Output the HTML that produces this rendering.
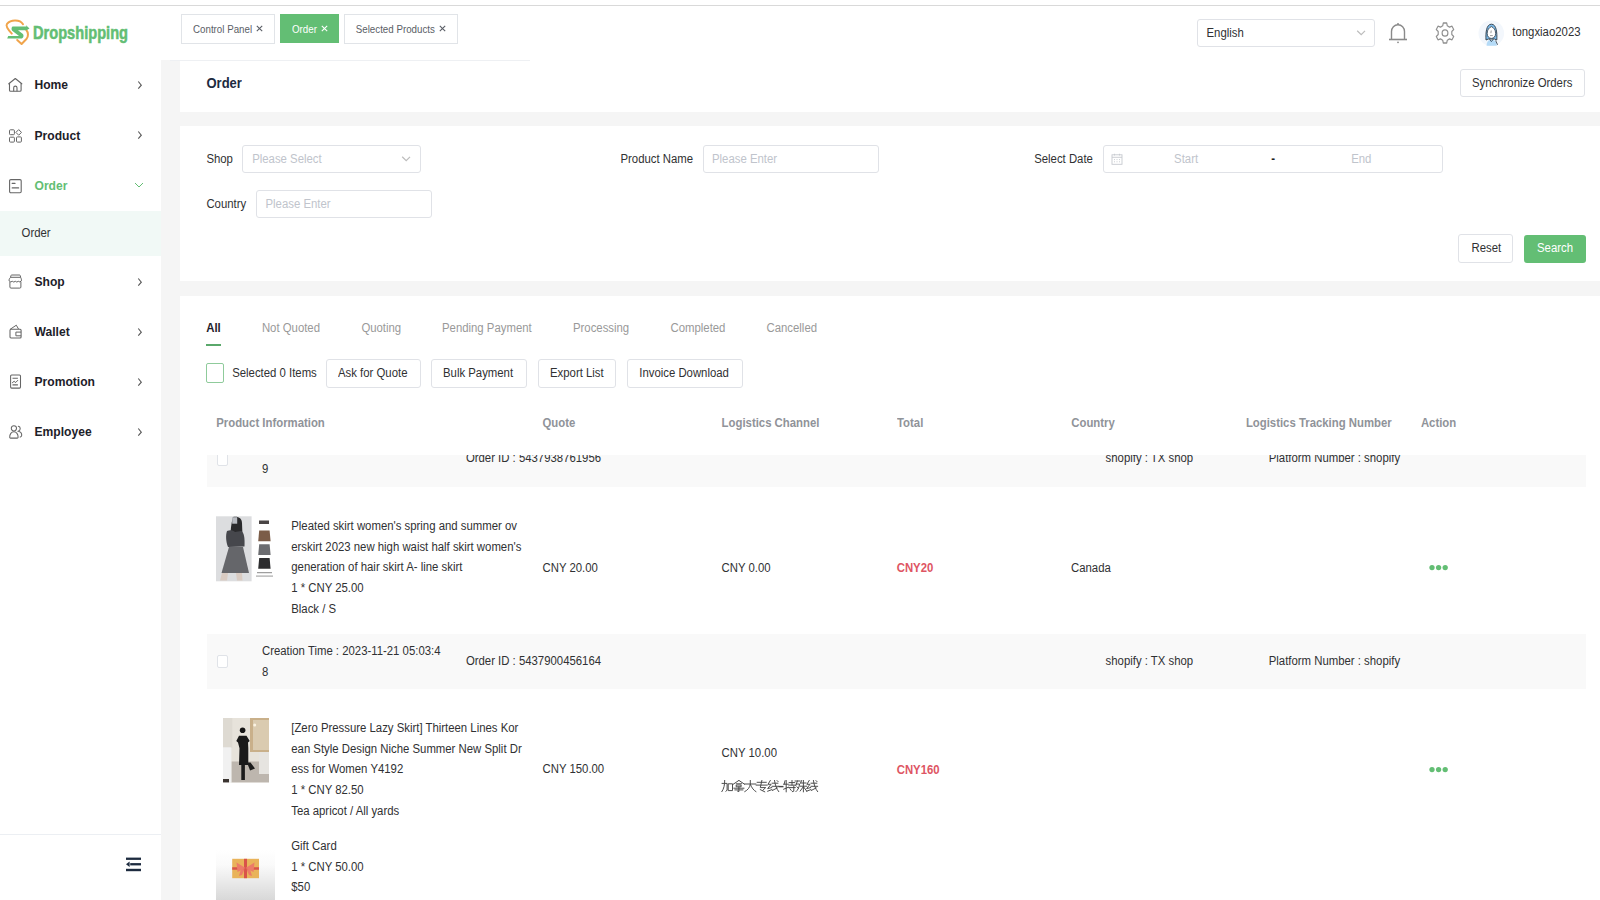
<!DOCTYPE html>
<html><head><meta charset="utf-8">
<style>
*{box-sizing:border-box;margin:0;padding:0}
html,body{width:1600px;height:900px;overflow:hidden;background:#fff;font-family:"Liberation Sans",sans-serif;color:#303133;position:relative}
.r{position:absolute}
.t{position:absolute;white-space:nowrap;line-height:1;transform:scaleY(1.13)}
</style></head><body>
<div class="r" style="left:0.00px;top:5.00px;width:1600.00px;height:1.00px;background:#d9d9d9"></div>
<div class="r" style="left:161.00px;top:60.00px;width:1439.00px;height:840.00px;background:#f5f5f5"></div>
<div class="r" style="left:180.00px;top:60.00px;width:1420.00px;height:52.00px;background:#fff"></div>
<div class="r" style="left:180.00px;top:126.40px;width:1420.00px;height:154.60px;background:#fff"></div>
<div class="r" style="left:180.00px;top:295.60px;width:1420.00px;height:604.40px;background:#fff"></div>
<div class="r" style="left:170.00px;top:60.00px;width:360.00px;height:1.00px;background:#eef0f3"></div>
<svg class="r" style="left:0px;top:10px" width="32" height="40" viewBox="0 0 32 40">
<path d="M23 14.2 C 20 9.5, 11 9.2, 7 13.8 C 5.6 15.6, 6.6 18, 11.8 23.6" fill="none" stroke="#f0a44b" stroke-width="2" stroke-linecap="round"/>
<path d="M26.3 20 C 28.4 22.5, 28.6 26.5, 26.4 29 L 21.6 34 L 17.2 30" fill="none" stroke="#f0a44b" stroke-width="2" stroke-linecap="round" stroke-linejoin="round"/>
<path d="M12.5 16.6 L 26.5 16.6 L 25.8 15 L 29.5 18.4 L 26.5 20.2 L 18 20.2 L 22.6 23.8 C 24.2 25.3, 23.6 28.3, 21.6 28.5 L 7.2 28.6 L 8.2 26 L 19 26 L 12.2 20.8 C 11.2 19.8, 11.4 17.3, 12.5 16.6 Z" fill="#63be74"/>
</svg>
<svg class="r" style="left:32px;top:20px" width="100" height="26"><text x="1" y="19" font-family="Liberation Sans" font-weight="700" font-size="18" fill="#63be74" stroke="#63be74" stroke-width="0.55" textLength="95" lengthAdjust="spacingAndGlyphs">Dropshipping</text></svg>
<div class="r" style="left:181.00px;top:13.50px;width:93.50px;height:30.00px;background:#fff;border:1px solid #e1e4e8"></div>
<div class="t" style="left:193.00px;top:24.55px;font-size:9.75px;font-weight:400;color:#5a5e66;transform-origin:0 8.25px;">Control Panel</div>
<svg class="r" style="left:256.00px;top:25px" width="7" height="7"><path d="M0.8 0.8 L6.2 6.2 M6.2 0.8 L0.8 6.2" stroke="#5a5e66" stroke-width="1.1"/></svg>
<div class="r" style="left:280.00px;top:14.00px;width:59.00px;height:29.00px;background:#63be74"></div>
<div class="t" style="left:292.00px;top:24.55px;font-size:9.75px;font-weight:400;color:#fff;transform-origin:0 8.25px;">Order</div>
<svg class="r" style="left:320.50px;top:25px" width="7" height="7"><path d="M0.8 0.8 L6.2 6.2 M6.2 0.8 L0.8 6.2" stroke="#fff" stroke-width="1.1"/></svg>
<div class="r" style="left:343.75px;top:13.50px;width:114.00px;height:30.00px;background:#fff;border:1px solid #e1e4e8"></div>
<div class="t" style="left:355.75px;top:24.55px;font-size:9.75px;font-weight:400;color:#5a5e66;transform-origin:0 8.25px;">Selected Products</div>
<svg class="r" style="left:439.25px;top:25px" width="7" height="7"><path d="M0.8 0.8 L6.2 6.2 M6.2 0.8 L0.8 6.2" stroke="#5a5e66" stroke-width="1.1"/></svg>
<div class="r" style="left:1197.00px;top:19.00px;width:178.00px;height:28.00px;background:#fff;border:1px solid #e0e2e7;border-radius:3px"></div>
<div class="t" style="left:1206.50px;top:27.67px;font-size:11.375px;font-weight:400;color:#303133;transform-origin:0 9.63px;">English</div>
<svg class="r" style="left:1355px;top:29px" width="12" height="8"><path d="M2.2 1.8 L6.2 5.7 L10 1.9" fill="none" stroke="#bdbdbd" stroke-width="1.25"/></svg>
<svg class="r" style="left:1388px;top:22px" width="20" height="22" viewBox="0 0 20 22">
<path d="M3.5 17 L3.5 9.5 C3.5 5.5 6.3 2.8 10 2.8 C13.7 2.8 16.5 5.5 16.5 9.5 L16.5 17" fill="none" stroke="#8a8a8a" stroke-width="1.4"/>
<path d="M1 17.5 L19 17.5" stroke="#8a8a8a" stroke-width="1.6"/>
<circle cx="10" cy="2" r="1" fill="#8a8a8a"/><circle cx="10" cy="20.3" r="0.9" fill="#8a8a8a"/>
</svg>
<svg class="r" style="left:1434.5px;top:22px" width="20" height="22" viewBox="0 1.6 20 19.8" preserveAspectRatio="none">
<path d="M8.3 2.5 L11.7 2.5 L12.3 5 L14.5 6.2 L17 5.4 L18.7 8.4 L16.8 10.2 L16.8 12.8 L18.7 14.6 L17 17.6 L14.5 16.8 L12.3 18 L11.7 20.5 L8.3 20.5 L7.7 18 L5.5 16.8 L3 17.6 L1.3 14.6 L3.2 12.8 L3.2 10.2 L1.3 8.4 L3 5.4 L5.5 6.2 L7.7 5 Z" fill="none" stroke="#8f8f8f" stroke-width="1.15" stroke-linejoin="round"/>
<circle cx="10" cy="11.5" r="2.9" fill="none" stroke="#8f8f8f" stroke-width="1.15"/>
</svg>
<svg class="r" style="left:1478px;top:19px" width="27" height="28" viewBox="0 0 27 28">
<circle cx="13.3" cy="14.3" r="12.8" fill="#f3f7fc"/>
<path d="M8.6 26.8 C8.6 22.5, 10.5 20.8, 13.4 20.8 C16.3 20.8, 18.8 22.5, 18.8 26.8 Z" fill="#b5dbf7"/>
<path d="M8 21 C7.6 14, 8.2 5.2, 13.4 5.2 C18.6 5.2, 19.2 14, 18.8 21 L16.5 20 L10.3 20 Z" fill="#7cbbea" stroke="#2d3a46" stroke-width="0.9"/>
<path d="M9.2 14.5 C9.2 10.5, 11 8.8, 13.4 7.6 C15.8 8.8, 17.6 10.5, 17.6 14.5 C17.6 17.5, 15.8 19.4, 13.4 19.4 C11 19.4, 9.2 17.5, 9.2 14.5 Z" fill="#fff" stroke="#2d3a46" stroke-width="0.8"/>
<path d="M12 16.6 L14.8 16.6 M13.2 11.5 L12.9 14.2" stroke="#555" stroke-width="0.6" fill="none"/>
<path d="M11.5 20.2 L13.4 22.6 L15.3 20.2" fill="none" stroke="#2d3a46" stroke-width="0.8"/>
<path d="M17.6 21.5 L19.6 25.8" stroke="#2d3a46" stroke-width="0.8"/>
</svg>
<div class="t" style="left:1512.30px;top:27.07px;font-size:11.375px;font-weight:400;color:#303133;transform-origin:0 9.63px;">tongxiao2023</div>
<svg class="r" style="left:8px;top:78.1px;overflow:visible" width="14" height="14" viewBox="0 0 14 14"><path d="M0.8 5.8 L7.3 0.5 L13.8 5.8" fill="none" stroke="#666" stroke-width="1.1" stroke-linejoin="round" stroke-linecap="round"/><path d="M1.5 5.3 V12.3 Q1.5 13.3 2.6 13.3 H12 Q13.1 13.3 13.1 12.3 V5.3" fill="none" stroke="#666" stroke-width="1.1"/><path d="M5.7 13.3 V9.8 A1.65 1.65 0 0 1 9.0 9.8 V13.3" fill="none" stroke="#666" stroke-width="1.1"/></svg>
<div class="t" style="left:34.50px;top:79.26px;font-size:12.1px;font-weight:700;color:#1d2129;transform-origin:0 10.24px;">Home</div>
<svg class="r" style="left:136px;top:80.1px" width="8" height="10"><path d="M2.3 1.5 L5.3 5.2 L2.3 8.6" fill="none" stroke="#555" stroke-width="1.1"/></svg>
<svg class="r" style="left:8px;top:128.4px;overflow:visible" width="14" height="14" viewBox="0 0 14 14"><rect x="1.5" y="1.8" width="4.9" height="4.9" rx="0.9" fill="none" stroke="#666" stroke-width="1"/><path d="M10.7 1.6 L13.5 4.4 L10.7 7.2 L7.9 4.4 Z" fill="none" stroke="#666" stroke-width="1" stroke-linejoin="round"/><rect x="1.5" y="9.2" width="4.9" height="4.9" rx="0.9" fill="none" stroke="#666" stroke-width="1"/><rect x="8.5" y="8.9" width="4.9" height="5.2" rx="0.9" fill="none" stroke="#666" stroke-width="1"/></svg>
<div class="t" style="left:34.50px;top:129.56px;font-size:12.1px;font-weight:700;color:#1d2129;transform-origin:0 10.24px;">Product</div>
<svg class="r" style="left:136px;top:130.4px" width="8" height="10"><path d="M2.3 1.5 L5.3 5.2 L2.3 8.6" fill="none" stroke="#555" stroke-width="1.1"/></svg>
<svg class="r" style="left:8px;top:179.0px;overflow:visible" width="14" height="14" viewBox="0 0 14 14"><rect x="1.6" y="0.6" width="11.6" height="13.2" rx="1.2" fill="none" stroke="#666" stroke-width="1.1"/><path d="M4.2 4.4 L7 4.4 M4.2 8.9 L10.6 8.9" stroke="#666" stroke-width="1.2" stroke-linecap="round"/></svg>
<div class="t" style="left:34.50px;top:180.16px;font-size:12.1px;font-weight:700;color:#63be74;transform-origin:0 10.24px;">Order</div>
<svg class="r" style="left:134px;top:181.0px" width="10" height="8"><path d="M1 2 L5 6 L9 2" fill="none" stroke="#63be74" stroke-width="1"/></svg>
<svg class="r" style="left:8px;top:274.5px;overflow:visible" width="14" height="14" viewBox="0 0 14 14"><path d="M2.6 2.3 L2.9 0.7 Q3.05 0 3.7 0 H11.5 Q12.15 0 12.3 0.7 L12.6 2.3 Z" fill="none" stroke="#666" stroke-width="1" stroke-linejoin="round"/><path d="M2.6 2.3 C1.3 3.5 0.8 5 1.2 6 Q2.7 7.7 4.3 6.3 Q5.8 7.8 7.3 6.3 Q8.8 7.8 10.3 6.3 Q11.9 7.7 13.3 6 C13.7 5 13.3 3.5 12.6 2.3" fill="none" stroke="#666" stroke-width="1" stroke-linejoin="round"/><path d="M1.9 6.8 V12 Q1.9 13.1 3 13.1 H11.8 Q12.9 13.1 12.9 12 V6.8" fill="none" stroke="#666" stroke-width="1"/></svg>
<div class="t" style="left:34.50px;top:275.66px;font-size:12.1px;font-weight:700;color:#1d2129;transform-origin:0 10.24px;">Shop</div>
<svg class="r" style="left:136px;top:276.5px" width="8" height="10"><path d="M2.3 1.5 L5.3 5.2 L2.3 8.6" fill="none" stroke="#555" stroke-width="1.1"/></svg>
<svg class="r" style="left:8px;top:324.5px;overflow:visible" width="14" height="14" viewBox="0 0 14 14"><path d="M2 4.4 L8.3 0.2 L10.5 4" fill="none" stroke="#666" stroke-width="1" stroke-linejoin="round"/><rect x="2" y="4.3" width="11.1" height="8.6" rx="1" fill="none" stroke="#666" stroke-width="1.05"/><path d="M13.1 7.1 H7.9 V10.8 H13.1" fill="none" stroke="#666" stroke-width="1"/></svg>
<div class="t" style="left:34.50px;top:325.66px;font-size:12.1px;font-weight:700;color:#1d2129;transform-origin:0 10.24px;">Wallet</div>
<svg class="r" style="left:136px;top:326.5px" width="8" height="10"><path d="M2.3 1.5 L5.3 5.2 L2.3 8.6" fill="none" stroke="#555" stroke-width="1.1"/></svg>
<svg class="r" style="left:8px;top:375.0px;overflow:visible" width="14" height="14" viewBox="0 0 14 14"><rect x="2.6" y="0" width="9.9" height="13.1" rx="1" fill="none" stroke="#666" stroke-width="1.05"/><path d="M4.5 3.3 H9.9 M4.5 9.9 H9.9" stroke="#666" stroke-width="1.1"/><path d="M4.4 7.7 L6.2 6.2 Q7 7.9 7.8 7.4 L9.7 5.4" fill="none" stroke="#666" stroke-width="1" stroke-linecap="round" stroke-linejoin="round"/></svg>
<div class="t" style="left:34.50px;top:376.16px;font-size:12.1px;font-weight:700;color:#1d2129;transform-origin:0 10.24px;">Promotion</div>
<svg class="r" style="left:136px;top:377.0px" width="8" height="10"><path d="M2.3 1.5 L5.3 5.2 L2.3 8.6" fill="none" stroke="#555" stroke-width="1.1"/></svg>
<svg class="r" style="left:8px;top:425.2px;overflow:visible" width="14" height="14" viewBox="0 0 14 14"><circle cx="5.9" cy="3.3" r="2.6" fill="none" stroke="#666" stroke-width="1.05"/><path d="M1.7 12.5 C1.5 9, 3.5 6.8, 5.9 6.8 C8.3 6.8, 10.3 9, 10.1 12.5 Q10 13.1 9.3 13.1 H2.5 Q1.8 13.1 1.7 12.5 Z" fill="none" stroke="#666" stroke-width="1.05"/><path d="M10.3 1.2 C12.5 1.6 13.2 4.9 10.4 6.2 C12.6 6.8 13.9 8.5 13.7 10.5 C13.6 11.3 13.1 11.8 12.2 12.1" fill="none" stroke="#666" stroke-width="1.05" stroke-linecap="round"/></svg>
<div class="t" style="left:34.50px;top:426.36px;font-size:12.1px;font-weight:700;color:#1d2129;transform-origin:0 10.24px;">Employee</div>
<svg class="r" style="left:136px;top:427.2px" width="8" height="10"><path d="M2.3 1.5 L5.3 5.2 L2.3 8.6" fill="none" stroke="#555" stroke-width="1.1"/></svg>
<div class="r" style="left:0.00px;top:211.00px;width:161.00px;height:45.00px;background:#f1f9f6"></div>
<div class="t" style="left:21.60px;top:227.77px;font-size:11.375px;font-weight:400;color:#303133;transform-origin:0 9.63px;">Order</div>
<div class="r" style="left:0.00px;top:834.00px;width:161.00px;height:1.00px;background:#eceff3"></div>
<svg class="r" style="left:125px;top:856px" width="17" height="16" viewBox="0 0 17 16"><rect x="1" y="1.6" width="15" height="2.3" fill="#1d2b3f"/><rect x="5.2" y="7.1" width="10.8" height="2.3" fill="#1d2b3f"/><path d="M1 8.25 L4.6 5.6 L4.6 10.9 Z" fill="#1d2b3f"/><rect x="1" y="12.8" width="15" height="2.4" fill="#1d2b3f"/></svg>
<div class="t" style="left:206.50px;top:77.10px;font-size:13px;font-weight:700;color:#1d2b3f;transform-origin:0 11.00px;">Order</div>
<div class="r" style="left:1459.50px;top:69.20px;width:125.50px;height:28.30px;background:#fff;border:1px solid #e0e2e7;border-radius:3px"></div>
<div class="t" style="left:1472.00px;top:77.97px;font-size:11.375px;font-weight:400;color:#303133;transform-origin:0 9.63px;">Synchronize Orders</div>
<div class="t" style="left:206.40px;top:153.87px;font-size:11.375px;font-weight:400;color:#303133;transform-origin:0 9.63px;">Shop</div>
<div class="r" style="left:242.30px;top:144.60px;width:178.30px;height:28.40px;background:#fff;border:1px solid #e0e2e7;border-radius:3px"></div>
<div class="t" style="left:252.20px;top:153.87px;font-size:11.375px;font-weight:400;color:#c0c4cc;transform-origin:0 9.63px;">Please Select</div>
<svg class="r" style="left:400px;top:155px" width="12" height="8"><path d="M2.2 1.8 L6.2 5.7 L10 1.9" fill="none" stroke="#bdbdbd" stroke-width="1.25"/></svg>
<div class="t" style="left:620.50px;top:153.87px;font-size:11.375px;font-weight:400;color:#303133;transform-origin:0 9.63px;">Product Name</div>
<div class="r" style="left:703.30px;top:144.60px;width:175.40px;height:28.40px;background:#fff;border:1px solid #e0e2e7;border-radius:3px"></div>
<div class="t" style="left:712.00px;top:153.87px;font-size:11.375px;font-weight:400;color:#c0c4cc;transform-origin:0 9.63px;">Please Enter</div>
<div class="t" style="left:1034.20px;top:153.87px;font-size:11.375px;font-weight:400;color:#303133;transform-origin:0 9.63px;">Select Date</div>
<div class="r" style="left:1103.30px;top:144.60px;width:340.20px;height:28.40px;background:#fff;border:1px solid #e0e2e7;border-radius:3px"></div>
<svg class="r" style="left:1110.5px;top:153px" width="12" height="12" viewBox="0 0 12 12"><rect x="1" y="1.8" width="10" height="9.5" fill="none" stroke="#c6c9cf" stroke-width="0.9"/><path d="M1 4.3 L11 4.3 M3.5 0.8 L3.5 2.5 M8.5 0.8 L8.5 2.5" stroke="#c6c9cf" stroke-width="0.9"/><path d="M3 6.6 h1 M5.5 6.6 h1 M8 6.6 h1 M3 8.8 h1 M5.5 8.8 h1 M8 8.8 h1" stroke="#c6c9cf" stroke-width="0.9"/></svg>
<div class="t" style="left:1174.10px;top:153.87px;font-size:11.375px;font-weight:400;color:#c0c4cc;transform-origin:0 9.63px;">Start</div>
<div class="t" style="left:1271.30px;top:153.87px;font-size:11.375px;font-weight:700;color:#222;transform-origin:0 9.63px;">-</div>
<div class="t" style="left:1351.20px;top:153.87px;font-size:11.375px;font-weight:400;color:#c0c4cc;transform-origin:0 9.63px;">End</div>
<div class="t" style="left:206.40px;top:199.17px;font-size:11.375px;font-weight:400;color:#303133;transform-origin:0 9.63px;">Country</div>
<div class="r" style="left:256.40px;top:190.20px;width:175.30px;height:28.10px;background:#fff;border:1px solid #e0e2e7;border-radius:3px"></div>
<div class="t" style="left:265.50px;top:199.17px;font-size:11.375px;font-weight:400;color:#c0c4cc;transform-origin:0 9.63px;">Please Enter</div>
<div class="r" style="left:1458.40px;top:234.40px;width:55.10px;height:28.70px;background:#fff;border:1px solid #e0e2e7;border-radius:3px"></div>
<div class="t" style="left:1471.50px;top:243.47px;font-size:11.375px;font-weight:400;color:#303133;transform-origin:0 9.63px;">Reset</div>
<div class="r" style="left:1523.75px;top:234.50px;width:61.85px;height:28.60px;background:#63be74;border-radius:3px"></div>
<div class="t" style="left:1537.00px;top:243.47px;font-size:11.375px;font-weight:400;color:#fff;transform-origin:0 9.63px;">Search</div>
<div class="t" style="left:206.25px;top:323.07px;font-size:11.375px;font-weight:700;color:#1d2129;transform-origin:0 9.63px;">All</div>
<div class="r" style="left:206.25px;top:344.40px;width:14.50px;height:1.60px;background:#5aa86b"></div>
<div class="t" style="left:261.90px;top:323.07px;font-size:11.375px;font-weight:400;color:#999;transform-origin:0 9.63px;">Not Quoted</div>
<div class="t" style="left:361.40px;top:323.07px;font-size:11.375px;font-weight:400;color:#999;transform-origin:0 9.63px;">Quoting</div>
<div class="t" style="left:442.00px;top:323.07px;font-size:11.375px;font-weight:400;color:#999;transform-origin:0 9.63px;">Pending Payment</div>
<div class="t" style="left:573.00px;top:323.07px;font-size:11.375px;font-weight:400;color:#999;transform-origin:0 9.63px;">Processing</div>
<div class="t" style="left:670.50px;top:323.07px;font-size:11.375px;font-weight:400;color:#999;transform-origin:0 9.63px;">Completed</div>
<div class="t" style="left:766.50px;top:323.07px;font-size:11.375px;font-weight:400;color:#999;transform-origin:0 9.63px;">Cancelled</div>
<div class="r" style="left:206.25px;top:363.20px;width:17.60px;height:19.40px;background:#fff;border:1px solid #8fcb9b;border-radius:2px"></div>
<div class="t" style="left:232.20px;top:367.67px;font-size:11.375px;font-weight:400;color:#303133;transform-origin:0 9.63px;">Selected 0 Items</div>
<div class="r" style="left:325.50px;top:359.20px;width:95.00px;height:28.50px;background:#fff;border:1px solid #e0e2e7;border-radius:3px"></div>
<div class="t" style="left:338.00px;top:367.67px;font-size:11.375px;font-weight:400;color:#303133;transform-origin:0 9.63px;">Ask for Quote</div>
<div class="r" style="left:430.50px;top:359.20px;width:96.50px;height:28.50px;background:#fff;border:1px solid #e0e2e7;border-radius:3px"></div>
<div class="t" style="left:443.00px;top:367.67px;font-size:11.375px;font-weight:400;color:#303133;transform-origin:0 9.63px;">Bulk Payment</div>
<div class="r" style="left:537.50px;top:359.20px;width:78.75px;height:28.50px;background:#fff;border:1px solid #e0e2e7;border-radius:3px"></div>
<div class="t" style="left:550.00px;top:367.67px;font-size:11.375px;font-weight:400;color:#303133;transform-origin:0 9.63px;">Export List</div>
<div class="r" style="left:626.75px;top:359.20px;width:115.75px;height:28.50px;background:#fff;border:1px solid #e0e2e7;border-radius:3px"></div>
<div class="t" style="left:639.25px;top:367.67px;font-size:11.375px;font-weight:400;color:#303133;transform-origin:0 9.63px;">Invoice Download</div>
<div class="r" style="left:0;top:455px;width:1600px;height:445px;overflow:hidden">
<div class="r" style="left:206.60px;top:-23.25px;width:1379.25px;height:55.00px;background:#f9f9f9"></div>
<div class="r" style="left:217.20px;top:-2.00px;width:10.40px;height:12.60px;background:#fff;border:1px solid #e0e3e8;border-radius:2px"></div>
<div class="t" style="left:262.00px;top:-12.03px;font-size:11.375px;font-weight:400;color:#303133;transform-origin:0 9.63px">Creation Time : 2023-11-21 05:03:4</div>
<div class="t" style="left:262.00px;top:8.77px;font-size:11.375px;font-weight:400;color:#303133;transform-origin:0 9.63px">9</div>
<div class="t" style="left:465.90px;top:-2.03px;font-size:11.375px;font-weight:400;color:#303133;transform-origin:0 9.63px">Order ID : 5437938761956</div>
<div class="t" style="left:1105.60px;top:-2.03px;font-size:11.375px;font-weight:400;color:#303133;transform-origin:0 9.63px">shopify : TX shop</div>
<div class="t" style="left:1268.75px;top:-2.03px;font-size:11.375px;font-weight:400;color:#303133;transform-origin:0 9.63px">Platform Number : shopify</div>
<svg class="r" style="left:216px;top:60.5px" width="60" height="66" viewBox="0 0 60 66">
<rect x="0" y="0.3" width="35.6" height="65" fill="#dcdddf"/>
<path d="M17 1 C22 0, 26 2, 26 7 L26.5 20 C26 22, 24 23, 22 22 L15 22 C14 18, 15 8, 17 1 Z" fill="#2a2a2c"/>
<rect x="16.2" y="1.2" width="5" height="6.5" fill="#b9bcc2"/>
<path d="M11 15 C14 13.5, 17 14, 19 16 L25 15 C28 16, 29 22, 28.5 30.5 L12 31 C10 26, 9.5 19, 11 15 Z" fill="#46474c"/>
<path d="M13 31 L27 31 L33 57 L5.5 57 Z" fill="#65666a"/>
<path d="M6 57 L4 64.5 L11 64.5 L12 57 Z M20 57 L21 64.5 L26.5 64.5 L26 57 Z" fill="#d9cbc2"/>
<rect x="43" y="4.5" width="10" height="3.5" fill="#4a4545"/>
<path d="M43.2 14.5 L53.6 14.5 L54.6 25.3 L42.2 25.3 Z" fill="#7b5c48"/>
<path d="M43.2 28.2 L53.6 28.2 L54.6 39 L42.2 39 Z" fill="#6b6c70"/>
<path d="M43.2 42 L53.6 42 L54.6 52.8 L42.2 52.8 Z" fill="#2c2c2e"/>
<rect x="41" y="56.2" width="15" height="1" fill="#888"/>
<rect x="40" y="59.5" width="17" height="1.2" fill="#aaa"/>
</svg>
<div class="t" style="left:291.25px;top:65.77px;font-size:11.375px;font-weight:400;color:#303133;transform-origin:0 9.63px">Pleated skirt women's spring and summer ov</div>
<div class="t" style="left:291.25px;top:86.52px;font-size:11.375px;font-weight:400;color:#303133;transform-origin:0 9.63px">erskirt 2023 new high waist half skirt women's</div>
<div class="t" style="left:291.25px;top:107.27px;font-size:11.375px;font-weight:400;color:#303133;transform-origin:0 9.63px">generation of hair skirt A- line skirt</div>
<div class="t" style="left:291.25px;top:128.02px;font-size:11.375px;font-weight:400;color:#303133;transform-origin:0 9.63px">1 * CNY 25.00</div>
<div class="t" style="left:291.25px;top:148.77px;font-size:11.375px;font-weight:400;color:#303133;transform-origin:0 9.63px">Black / S</div>
<div class="t" style="left:542.50px;top:107.52px;font-size:11.375px;font-weight:400;color:#303133;transform-origin:0 9.63px">CNY 20.00</div>
<div class="t" style="left:721.60px;top:107.52px;font-size:11.375px;font-weight:400;color:#303133;transform-origin:0 9.63px">CNY 0.00</div>
<div class="t" style="left:896.70px;top:107.52px;font-size:11.375px;font-weight:700;color:#de5563;transform-origin:0 9.63px">CNY20</div>
<div class="t" style="left:1071.00px;top:107.52px;font-size:11.375px;font-weight:400;color:#303133;transform-origin:0 9.63px">Canada</div>
<svg class="r" style="left:1428px;top:108px" width="22" height="8"><circle cx="4" cy="4.55" r="2.65" fill="#63be74"/><circle cx="10.6" cy="4.55" r="2.65" fill="#63be74"/><circle cx="17.2" cy="4.55" r="2.65" fill="#63be74"/></svg>
<div class="r" style="left:206.60px;top:178.75px;width:1379.25px;height:55.00px;background:#f9f9f9"></div>
<div class="r" style="left:217.20px;top:200.00px;width:10.40px;height:12.60px;background:#fff;border:1px solid #e0e3e8;border-radius:2px"></div>
<div class="t" style="left:262.00px;top:190.77px;font-size:11.375px;font-weight:400;color:#303133;transform-origin:0 9.63px">Creation Time : 2023-11-21 05:03:4</div>
<div class="t" style="left:262.00px;top:211.52px;font-size:11.375px;font-weight:400;color:#303133;transform-origin:0 9.63px">8</div>
<div class="t" style="left:465.90px;top:200.77px;font-size:11.375px;font-weight:400;color:#303133;transform-origin:0 9.63px">Order ID : 5437900456164</div>
<div class="t" style="left:1105.60px;top:200.77px;font-size:11.375px;font-weight:400;color:#303133;transform-origin:0 9.63px">shopify : TX shop</div>
<div class="t" style="left:1268.75px;top:200.77px;font-size:11.375px;font-weight:400;color:#303133;transform-origin:0 9.63px">Platform Number : shopify</div>
<svg class="r" style="left:222.9px;top:263px" width="46" height="65" viewBox="0 0 46 65">
<rect x="0" y="0" width="46" height="64.4" fill="#e7e3db"/>
<rect x="0" y="0" width="9.3" height="30" fill="#dedad2"/>
<rect x="27" y="0" width="19" height="34" fill="#c9b08a"/>
<rect x="30" y="2" width="16" height="30" fill="#dacbb0"/>
<circle cx="31.7" cy="7.1" r="1.5" fill="#fbf3e2"/>
<rect x="8.4" y="43.5" width="37.6" height="20.9" fill="#bdb6ae"/>
<rect x="0" y="29.3" width="8.4" height="35.1" fill="#f1f1f1"/>
<rect x="0" y="61" width="6" height="3.4" fill="#3a3430"/>
<rect x="36" y="34" width="10" height="22" fill="#e6e4e0"/>
<circle cx="19.6" cy="12.2" r="2.8" fill="#151515"/>
<path d="M13.3 23 L16 17.8 L23.5 17.8 L26.7 23 L25 24.5 L25.3 30.2 L25.3 47 L16 47 L16.5 30.2 L15 24.5 Z" fill="#1a1a1a"/>
<path d="M18.3 47 L18.3 62 L21.9 62 L21.9 47 Z M24 44.5 L27.1 52.5 L32 50.5 L27.5 44.5 Z" fill="#1c1c1c"/>
</svg>
<div class="t" style="left:291.25px;top:267.77px;font-size:11.375px;font-weight:400;color:#303133;transform-origin:0 9.63px">[Zero Pressure Lazy Skirt] Thirteen Lines Kor</div>
<div class="t" style="left:291.25px;top:288.52px;font-size:11.375px;font-weight:400;color:#303133;transform-origin:0 9.63px">ean Style Design Niche Summer New Split Dr</div>
<div class="t" style="left:291.25px;top:309.27px;font-size:11.375px;font-weight:400;color:#303133;transform-origin:0 9.63px">ess for Women Y4192</div>
<div class="t" style="left:291.25px;top:330.02px;font-size:11.375px;font-weight:400;color:#303133;transform-origin:0 9.63px">1 * CNY 82.50</div>
<div class="t" style="left:291.25px;top:350.77px;font-size:11.375px;font-weight:400;color:#303133;transform-origin:0 9.63px">Tea apricot / All yards</div>
<div class="t" style="left:542.50px;top:309.27px;font-size:11.375px;font-weight:400;color:#303133;transform-origin:0 9.63px">CNY 150.00</div>
<div class="t" style="left:721.60px;top:293.47px;font-size:11.375px;font-weight:400;color:#303133;transform-origin:0 9.63px">CNY 10.00</div>
<svg class="r" style="left:721px;top:324.8px" width="98" height="13" viewBox="0 0 98 13"><g fill="none" stroke="#454545" stroke-width="0.95" stroke-linecap="square"><path transform="translate(0.50 0)" d="M0.6 3.4 H5.6 V10.2 L4.4 11.2 M3.2 0.4 C3.2 5 2.5 8.5 0.4 11.6 M7.2 3.8 H11 V10.6 H7.2 Z"/><path transform="translate(11.90 0)" d="M6 0.4 L0.4 4.2 M6 0.4 L11.6 4.2 M3.4 3.8 H8.6 M3.8 5 H8.2 V6.8 H3.8 Z M1 8.2 H11 M2 9.9 H10 M6 7 V11.6 L4.8 11.2"/><path transform="translate(23.30 0)" d="M0.5 4 H11.5 M6 0.3 V4 C5.6 7.5 3.5 10 0.5 11.6 M6.2 4.6 C7.5 8 9.5 10.5 11.6 11.6"/><path transform="translate(34.70 0)" d="M1.5 2.3 H10.5 M0.5 5.1 H11.5 M6.2 0.3 L4.6 7.6 H10 L7.2 10.2 M4.6 9.6 L9 11.8"/><path transform="translate(46.10 0)" d="M3.2 0.5 L0.9 4.3 H4 L0.6 8.6 L4.6 7.6 M0.6 11.2 L4.8 9.6 M5 3.2 H10.8 M5 6.3 H11.6 M7.4 0.4 C8 5 9.5 9 11.6 11.6 M10 0.6 L11 1.6 M5.4 10.4 L10 8"/><path transform="translate(62.20 0)" d="M1.8 0.8 L1 4 M0.5 4.2 H5 M3 0.4 V11.8 M0.5 9.2 L5.2 7.2 M6 2.6 H11.5 M8.8 0.4 V5 M5.6 5.1 H12 M5.6 7.6 H12 M10.6 6 V11.2 L9.2 11.6 M6.8 8.8 L8 10.4"/><path transform="translate(73.60 0)" d="M0.5 1 H5.5 M2.8 1 L1.2 5.5 M1.6 4 H5 C4.4 7.5 3.4 10 1.4 11.6 M2.4 6.8 L3.8 8.4 M7 0.6 L6 3 M6.2 3 H11.4 M5.6 6.2 H12 M8.8 0.4 V11.8 M8.8 6.6 L5.6 11 M8.8 6.6 L12 11"/><path transform="translate(85.00 0)" d="M3.2 0.5 L0.9 4.3 H4 L0.6 8.6 L4.6 7.6 M0.6 11.2 L4.8 9.6 M5 3.2 H10.8 M5 6.3 H11.6 M7.4 0.4 C8 5 9.5 9 11.6 11.6 M10 0.6 L11 1.6 M5.4 10.4 L10 8"/><path d="M58.2 6.6 H61.8" stroke-width="1.4"/></g></svg>
<div class="t" style="left:896.70px;top:309.57px;font-size:11.375px;font-weight:700;color:#de5563;transform-origin:0 9.63px">CNY160</div>
<svg class="r" style="left:1428px;top:310.25px" width="22" height="8"><circle cx="4" cy="4.55" r="2.65" fill="#63be74"/><circle cx="10.6" cy="4.55" r="2.65" fill="#63be74"/><circle cx="17.2" cy="4.55" r="2.65" fill="#63be74"/></svg>
<svg class="r" style="left:216px;top:395px" width="59" height="50" viewBox="0 0 59 50">
<defs><linearGradient id="gg" x1="0" y1="0" x2="0" y2="1"><stop offset="0" stop-color="#fff"/><stop offset="0.3" stop-color="#fafafa"/><stop offset="1" stop-color="#d8d8d8"/></linearGradient></defs>
<rect x="0" y="0" width="59" height="50" fill="url(#gg)"/>
<rect x="16.2" y="8.8" width="26.8" height="19.4" fill="#e9b35a"/>
<rect x="28" y="8.8" width="3" height="19.4" fill="#d9534a"/>
<path d="M16.2 18.5 L43 18.5" stroke="#d9534a" stroke-width="2.5"/>
<path d="M20.5 12.5 L29.5 18 L21.5 22 Z M38.5 12.5 L29.5 18 L37.5 22 Z" fill="#ec7b68"/><path d="M25 19 L23 26 L26 25 L28.5 19.5 Z M34 19 L36 26 L33 25 L30.5 19.5 Z" fill="#ec7b68"/>
</svg>
<div class="t" style="left:291.25px;top:385.77px;font-size:11.375px;font-weight:400;color:#303133;transform-origin:0 9.63px">Gift Card</div>
<div class="t" style="left:291.25px;top:406.52px;font-size:11.375px;font-weight:400;color:#303133;transform-origin:0 9.63px">1 * CNY 50.00</div>
<div class="t" style="left:291.25px;top:427.27px;font-size:11.375px;font-weight:400;color:#303133;transform-origin:0 9.63px">$50</div>
</div>
<div class="t" style="left:216.25px;top:418.02px;font-size:11.375px;font-weight:700;color:#909399;transform-origin:0 9.63px;">Product Information</div>
<div class="t" style="left:542.50px;top:418.02px;font-size:11.375px;font-weight:700;color:#909399;transform-origin:0 9.63px;">Quote</div>
<div class="t" style="left:721.60px;top:418.02px;font-size:11.375px;font-weight:700;color:#909399;transform-origin:0 9.63px;">Logistics Channel</div>
<div class="t" style="left:897.00px;top:418.02px;font-size:11.375px;font-weight:700;color:#909399;transform-origin:0 9.63px;">Total</div>
<div class="t" style="left:1071.25px;top:418.02px;font-size:11.375px;font-weight:700;color:#909399;transform-origin:0 9.63px;">Country</div>
<div class="t" style="left:1245.90px;top:418.02px;font-size:11.375px;font-weight:700;color:#909399;transform-origin:0 9.63px;">Logistics Tracking Number</div>
<div class="t" style="left:1420.90px;top:418.02px;font-size:11.375px;font-weight:700;color:#909399;transform-origin:0 9.63px;">Action</div>
</body></html>
